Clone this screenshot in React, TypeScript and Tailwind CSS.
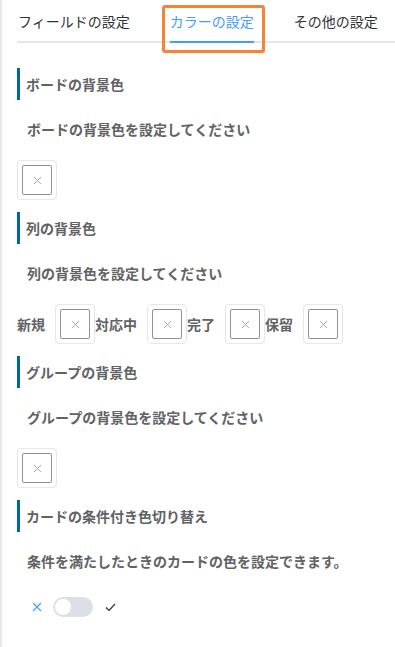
import React from "react";

const font = { fontFamily: '"Noto Sans CJK JP", "Noto Sans", sans-serif' };

function Picker() {
  return (
    <div className="w-[40px] h-[40px] border border-[#e4e7ed] rounded-[4px] flex items-center justify-center p-[4px] shrink-0">
      <div className="w-full h-full border border-[#909399] rounded-[2px] flex items-center justify-center">
        <svg width="9" height="9" viewBox="0 0 9 9" fill="none" stroke="#a8abb2" strokeWidth="1">
          <path d="M1 1 L8 8 M8 1 L1 8" />
        </svg>
      </div>
    </div>
  );
}

function Heading({ children, className = "" }: { children: React.ReactNode; className?: string }) {
  return (
    <div className={`h-[32px] flex items-center border-l-[3px] border-[#00679e] pl-[6px] text-[14px] font-bold text-[#606266] ${className}`}>
      {children}
    </div>
  );
}

function Desc({ children }: { children: React.ReactNode }) {
  return <div className="mt-[19px] pl-[10px] text-[14px] leading-[20px] font-bold text-[#606266]">{children}</div>;
}

export default function App() {
  return (
    <div className="relative min-h-[647px] bg-white border-l-2 border-[#e4e7ed] pl-[15px] overflow-hidden" style={font}>
      {/* tabs */}
      <div className="pt-[1px] flex border-b-2 border-[#e4e7ed] text-[14px] whitespace-nowrap">
        <div className="shrink-0 relative h-[40px] leading-[40px] pr-[20px] pl-[1px] text-[#303133]">フィールドの設定</div>
        <div className="shrink-0 relative h-[40px] leading-[40px] px-[20px] text-[#409eff]">
          カラーの設定
          <div className="absolute left-[20px] right-[20px] bottom-[-2px] h-[2px] bg-[#409eff]" />
        </div>
        <div className="shrink-0 h-[40px] leading-[40px] px-[20px] text-[#303133]">その他の設定</div>
      </div>
      <div className="absolute left-[160px] top-[5px] w-[103px] h-[48px] border-[3px] border-[#f5843a] rounded-[3px]" />

      <Heading className="mt-[25px]">ボードの背景色</Heading>
      <Desc>ボードの背景色を設定してください</Desc>
      <div className="mt-[21px]">
        <Picker />
      </div>

      <Heading className="mt-[12px]">列の背景色</Heading>
      <Desc>列の背景色を設定してください</Desc>
      <div className="mt-[21px] flex items-center text-[14px] font-bold text-[#606266]">
        <span className="mr-[10px]">新規</span>
        <Picker />
        <span className="mr-[10px]">対応中</span>
        <Picker />
        <span className="mr-[10px]">完了</span>
        <Picker />
        <span className="mr-[10px]">保留</span>
        <Picker />
      </div>

      <Heading className="mt-[12px]">グループの背景色</Heading>
      <Desc>グループの背景色を設定してください</Desc>
      <div className="mt-[21px]">
        <Picker />
      </div>

      <Heading className="mt-[12px]">カードの条件付き色切り替え</Heading>
      <Desc>条件を満たしたときのカードの色を設定できます。</Desc>
      <div className="mt-[26px] pl-[15px] flex items-center">
        <svg width="10" height="10" viewBox="0 0 10 10" fill="none" stroke="#409eff" strokeWidth="1.1">
          <path d="M1 1 L9 9 M9 1 L1 9" />
        </svg>
        <div className="ml-[11px] w-[40px] h-[20px] rounded-full bg-[#dcdfe6] relative">
          <div className="absolute left-[2px] top-[2px] w-[16px] h-[16px] rounded-full bg-white" />
        </div>
        <svg className="ml-[12px]" width="11" height="9" viewBox="0 0 11 9" fill="none" stroke="#303133" strokeWidth="1.2">
          <path d="M1 4.5 L4 7.5 L10 1" />
        </svg>
      </div>
    </div>
  );
}
